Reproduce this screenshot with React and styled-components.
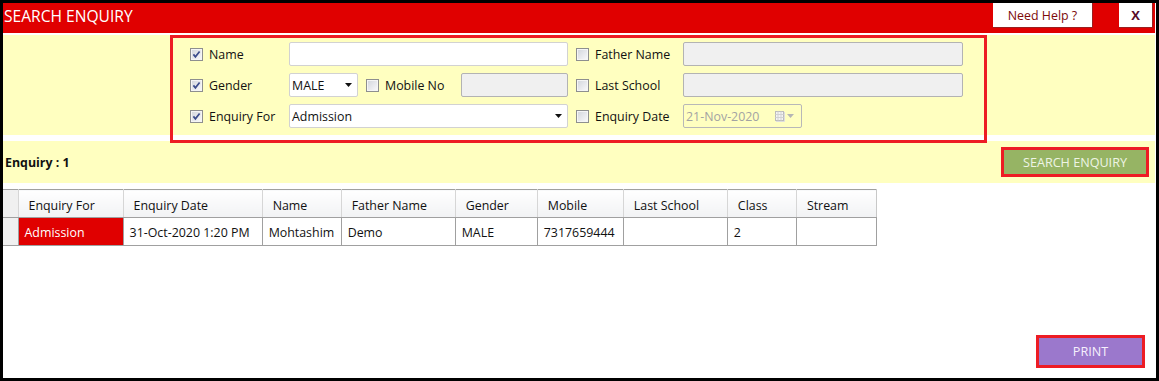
import React from 'react';
import styled, { createGlobalStyle } from 'styled-components';

const Global = createGlobalStyle`
  html, body { margin: 0; padding: 0; background: #fff; }
  body { font-family: "Open Sans", "Noto Sans", sans-serif; }
  * { box-sizing: border-box; }
`;

const Window = styled.div`
  width: 1159px;
  height: 381px;
  border: 3px solid #000;
  padding-right: 1px;
  background: #fff;
  display: flex;
  flex-direction: column;
  font-size: 12.4px;
  color: #111;
`;

const TitleBar = styled.header`
  height: 30px;
  flex: none;
  background: #e00000;
  display: flex;
  align-items: flex-start;
  padding-right: 2px;
`;

const Title = styled.h1`
  margin: 0;
  flex: 1;
  font-size: 15.6px;
  font-weight: 400;
  color: #fff;
  line-height: 26px;
  padding-left: 1px;
`;

const HeadButton = styled.button`
  height: 25px;
  width: ${(p) => p.$w}px;
  margin-left: ${(p) => p.$ml || 0}px;
  background: #fff;
  border: none;
  border-right: 1px solid #9a2020;
  border-bottom: 1px solid #9a2020;
  padding: 0;
  font-family: inherit;
  font-size: ${(p) => (p.$bold ? 13 : 12.4)}px;
  font-weight: ${(p) => (p.$bold ? 700 : 400)};
  color: ${(p) => (p.$bold ? '#5a0b2a' : '#7d0a0a')};
  cursor: pointer;
`;

const FilterPanel = styled.section`
  margin-top: 2px;
  height: 100px;
  flex: none;
  background: #ffffc0;
  display: flex;
  justify-content: flex-start;
  align-items: flex-start;
  padding-left: 167px;
`;

const FilterBox = styled.div`
  position: relative;
  width: 817px;
  height: 108px;
  border: 3px solid #ed1c24;
  padding: 4px 0 0 17px;
  display: flex;
  flex-direction: column;
  gap: 7px;
`;

const FormRow = styled.div`
  display: flex;
  align-items: center;
  height: 24px;
`;

const CheckField = styled.label`
  display: flex;
  align-items: center;
  gap: 6px;
  width: ${(p) => p.$w}px;
  margin-left: ${(p) => p.$ml || 0}px;
  height: 24px;
  color: #111;
  white-space: nowrap;
`;

const TextInput = styled.div`
  width: ${(p) => p.$w}px;
  height: 24px;
  border: 1px solid ${(p) => (p.$disabled ? '#b3b3b3' : '#d2d2d2')};
  border-radius: 2px;
  background: ${(p) => (p.$disabled ? '#f0f0f0' : '#fff')};
`;

const Select = styled.div`
  width: ${(p) => p.$w}px;
  height: 24px;
  border: 1px solid #d2d2d2;
  border-radius: 2px;
  background: #fff;
  display: flex;
  align-items: center;
  justify-content: space-between;
  padding: 0 5px 0 2px;
  color: #111;
`;

const DateBox = styled.div`
  width: ${(p) => p.$w}px;
  height: 24px;
  border: 1px solid #b8b8b8;
  border-radius: 2px;
  background: #ffffc0;
  display: flex;
  align-items: center;
  padding: 0 6px 0 2px;
  color: #a3a3a3;
`;

const DateText = styled.span`
  flex: 1;
`;

const SummaryBar = styled.div`
  margin-top: 6px;
  height: 42px;
  flex: none;
  background: #ffffc0;
  display: flex;
  align-items: center;
  justify-content: space-between;
  padding: 0 6px 0 2px;
`;

const Count = styled.span`
  font-weight: 700;
  color: #111;
`;

const ActionButton = styled.button`
  width: ${(p) => p.$w}px;
  height: ${(p) => p.$h}px;
  border: 3px solid #ed1c24;
  background: ${(p) => p.$bg};
  color: ${(p) => p.$fg};
  font-family: inherit;
  font-size: 12.6px;
  padding: 0;
  cursor: pointer;
`;

const GridWrap = styled.div`
  margin-top: 6px;
  flex: none;
`;

const Table = styled.table`
  border-collapse: collapse;
  table-layout: fixed;
  width: 874px;
`;

const HeadCell = styled.th`
  height: 28px;
  padding: 3px 0 0 10px;
  text-align: left;
  font-weight: 400;
  color: #111;
  background: linear-gradient(#ffffff, #f1f2f4);
  border-top: 1px solid #a0a0a0;
  border-bottom: 1px solid #a0a0a0;
  border-left: 1px solid #d6d6d6;
  border-right: 1px solid #d6d6d6;
  white-space: nowrap;
  &:first-child { background: #f0f0f0; border-left: none; }
  &:last-child { border-right: 1px solid #c8c8c8; }
`;

const Cell = styled.td`
  height: 28px;
  padding: 2px 0 0 6px;
  border: 1px solid #a0a0a0;
  white-space: nowrap;
  color: ${(p) => (p.$highlight ? '#fff' : '#111')};
  background: ${(p) => (p.$highlight ? '#e00000' : '#fff')};
  &:first-child { background: #f0f0f0; border-left: none; }
`;

const Footer = styled.div`
  flex: 1;
  display: flex;
  justify-content: flex-end;
  align-items: flex-end;
  padding: 0 10px 10px 0;
`;

const CheckBox = ({ checked }) => (
  <svg width="13" height="13" viewBox="0 0 13 13" style={{ flex: 'none' }}>
    <defs>
      <linearGradient id="cbg" x1="0" y1="0" x2="1" y2="1">
        <stop offset="0" stopColor="#d5d8de" />
        <stop offset="1" stopColor="#f7f7f9" />
      </linearGradient>
    </defs>
    <rect x="0.5" y="0.5" width="12" height="12" fill="#f5f5f5" stroke="#8e8f8f" />
    <rect x="2" y="2" width="9" height="9" fill="url(#cbg)" />
    {checked && (
      <path d="M3.4 6.4 L5.4 8.8 L9.6 3.4" fill="none" stroke="#3b4c8c" strokeWidth="1.7" />
    )}
  </svg>
);

const Caret = ({ color = '#111' }) => (
  <svg width="7" height="4" viewBox="0 0 7 4" style={{ flex: 'none' }}>
    <polygon points="0,0 7,0 3.5,4" fill={color} />
  </svg>
);

const CalendarIcon = () => (
  <svg width="20" height="11" viewBox="0 0 20 11" style={{ flex: 'none' }}>
    <rect x="0.5" y="0.5" width="8" height="9" fill="#f4f4f4" stroke="#bcbcbc" />
    <path d="M0.5 3.5 H8.5 M0.5 6.5 H8.5 M3 0.5 V9.5 M6 0.5 V9.5" stroke="#d2d2d2" strokeWidth="1" />
    <path d="M1 10.5 H9.5 V1" fill="none" stroke="#dedede" />
    <polygon points="12,3 19,3 15.5,7" fill="#b5b5b5" />
  </svg>
);

const columns = [
  { key: 'rh', label: '', w: 15 },
  { key: 'for', label: 'Enquiry For', w: 105 },
  { key: 'date', label: 'Enquiry Date', w: 139 },
  { key: 'name', label: 'Name', w: 79 },
  { key: 'father', label: 'Father Name', w: 114 },
  { key: 'gender', label: 'Gender', w: 82 },
  { key: 'mobile', label: 'Mobile', w: 86 },
  { key: 'school', label: 'Last School', w: 104 },
  { key: 'class', label: 'Class', w: 69 },
  { key: 'stream', label: 'Stream', w: 80 },
];

const rows = [
  {
    for: 'Admission',
    date: '31-Oct-2020 1:20 PM',
    name: 'Mohtashim',
    father: 'Demo',
    gender: 'MALE',
    mobile: '7317659444',
    school: '',
    class: '2',
    stream: '',
  },
];

export default function App() {
  return (
    <>
      <Global />
      <Window>
        <TitleBar>
          <Title>SEARCH ENQUIRY</Title>
          <HeadButton $w={100}>Need Help ?</HeadButton>
          <HeadButton $w={34} $ml={26} $bold>X</HeadButton>
        </TitleBar>

        <FilterPanel>
          <FilterBox>
            <FormRow>
              <CheckField $w={99}><CheckBox checked />Name</CheckField>
              <TextInput $w={279} />
              <CheckField $w={107} $ml={8}><CheckBox />Father Name</CheckField>
              <TextInput $w={280} $disabled />
            </FormRow>
            <FormRow>
              <CheckField $w={99}><CheckBox checked />Gender</CheckField>
              <Select $w={69}>MALE<Caret /></Select>
              <CheckField $w={95} $ml={8}><CheckBox />Mobile No</CheckField>
              <TextInput $w={107} $disabled />
              <CheckField $w={107} $ml={8}><CheckBox />Last School</CheckField>
              <TextInput $w={280} $disabled />
            </FormRow>
            <FormRow>
              <CheckField $w={99}><CheckBox checked />Enquiry For</CheckField>
              <Select $w={279}>Admission<Caret /></Select>
              <CheckField $w={107} $ml={8}><CheckBox />Enquiry Date</CheckField>
              <DateBox $w={119}>
                <DateText>21-Nov-2020</DateText>
                <CalendarIcon />
              </DateBox>
            </FormRow>
          </FilterBox>
        </FilterPanel>

        <SummaryBar>
          <Count>Enquiry : 1</Count>
          <ActionButton $w={148} $h={30} $bg="#96b464" $fg="#eef4e4">SEARCH ENQUIRY</ActionButton>
        </SummaryBar>

        <GridWrap>
          <Table>
            <colgroup>
              {columns.map((c) => (
                <col key={c.key} style={{ width: c.w }} />
              ))}
            </colgroup>
            <thead>
              <tr>
                {columns.map((c) => (
                  <HeadCell key={c.key}>{c.label}</HeadCell>
                ))}
              </tr>
            </thead>
            <tbody>
              {rows.map((r, i) => (
                <tr key={i}>
                  {columns.map((c) =>
                    c.key === 'rh' ? (
                      <Cell key={c.key} />
                    ) : (
                      <Cell key={c.key} $highlight={c.key === 'for'}>{r[c.key]}</Cell>
                    )
                  )}
                </tr>
              ))}
            </tbody>
          </Table>
        </GridWrap>

        <Footer>
          <ActionButton $w={109} $h={33} $bg="#9b78cc" $fg="#f6f0fc">PRINT</ActionButton>
        </Footer>
      </Window>
    </>
  );
}
